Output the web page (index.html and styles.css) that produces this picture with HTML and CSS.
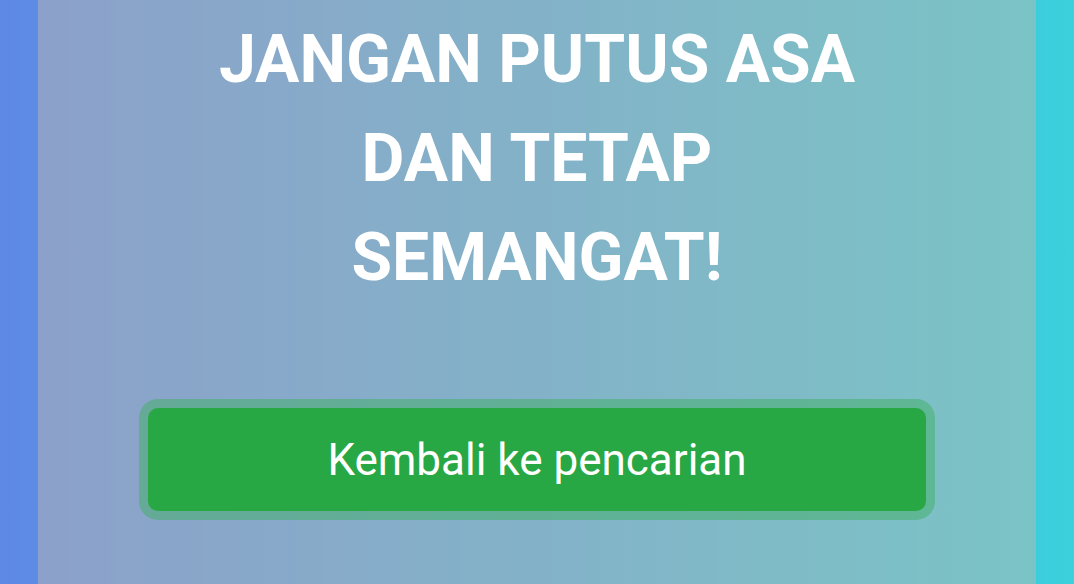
FILE: index.html
```html
<!DOCTYPE html>
<html lang="id">
<head>
<meta charset="utf-8">
<title>Semangat</title>
<link rel="stylesheet" href="styles.css">
</head>
<body>
<div class="page">
  <main class="panel">
    <h1 class="title">JANGAN PUTUS ASA DAN TETAP SEMANGAT!</h1>
    <div class="actions">
      <button class="btn-back" type="button">Kembali ke pencarian</button>
    </div>
  </main>
</div>
</body>
</html>
```
FILE: styles.css
```css
html, body {
  margin: 0;
  padding: 0;
  height: 100%;
}
body {
  font-family: Roboto, "Liberation Sans", Arial, sans-serif;
  overflow: hidden;
}
.page {
  height: 584px;
  background: linear-gradient(90deg, #5e89e5 0%, #3bd0dc 100%);
  padding: 0 38px;
  box-sizing: border-box;
}
.panel {
  height: 100%;
  background: rgba(193, 184, 172, 0.47);
  display: flex;
  flex-direction: column;
  align-items: center;
}
.title {
  margin: 10px 0 0;
  max-width: 680px;
  color: #fff;
  font-weight: 700;
  font-size: 66px;
  line-height: 99px;
  text-align: center;
}
.actions {
  margin-top: 101px;
  width: 778px;
}
.btn-back {
  display: block;
  width: 100%;
  height: 103px;
  background: #28a745;
  border: none;
  border-radius: 10px;
  box-shadow: 0 0 0 9px rgba(70, 175, 110, 0.55);
  color: #fff;
  font-family: Roboto, "Liberation Sans", Arial, sans-serif;
  font-size: 44px;
  font-weight: 400;
  cursor: pointer;
}
```
